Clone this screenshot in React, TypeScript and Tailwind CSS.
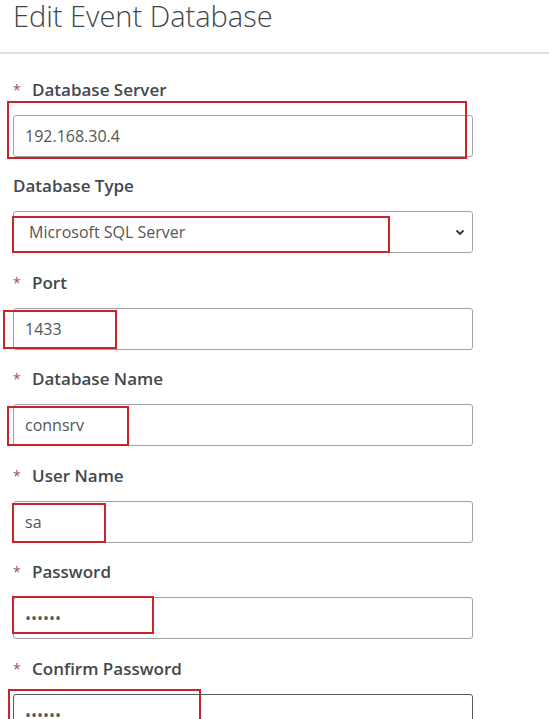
import React from "react";

interface FieldProps {
  label: string;
  required?: boolean;
  value: string;
  type?: string;
  focused?: boolean;
}

const Field: React.FC<FieldProps> = ({ label, required = true, value, type = "text", focused }) => {
  return (
    <div className="flex flex-col">
      <label className="flex h-[25px] items-center text-[17px] font-semibold leading-[25px] text-[#43484c]">
        {required && <span className="w-[19px] text-[14px] font-normal text-[#b5495b]">*</span>}
        {label}
      </label>
      <input
        type={type}
        readOnly
        value={value}
        className={
          focused
            ? "mt-[13px] h-[42px] w-[460px] rounded-[3px] border border-[#4f5d68] bg-white px-[11px] text-[16px] text-[#565656] outline-none"
            : "mt-[13px] h-[42px] w-[460px] rounded-[3px] border border-[#a3a3a3] bg-white px-[11px] text-[16px] text-[#565656] outline-none"
        }
      />
    </div>
  );
};

const App: React.FC = () => {
  return (
    <div className="relative h-[719px] w-[549px] overflow-hidden bg-white font-['Open_Sans',sans-serif]">
      {/* header */}
      <div className="h-[52px] pl-[13px] pt-[4px]">
        <h1 className="text-[29px] font-light leading-[24px] text-[#3e464c]">Edit Event Database</h1>
      </div>
      <div className="h-[2px] bg-[#dedede]" />

      {/* form */}
      <div className="flex flex-col gap-[16.5px] pl-[13px] pt-[22.5px]">
        <Field label="Database Server" value="192.168.30.4" />

        <div className="flex flex-col">
          <label className="flex h-[25px] items-center text-[17px] font-semibold leading-[25px] text-[#43484c]">
            Database Type
          </label>
          <div className="relative mt-[13px] flex h-[42px] w-[460px] items-center rounded-[3px] border border-[#a3a3a3] bg-white pl-[15px] text-[16px] text-[#565656]">
            Microsoft SQL Server
            <svg
              className="absolute right-[6px] top-[16px]"
              width="12"
              height="9"
              viewBox="0 0 12 9"
              fill="none"
              stroke="#333"
              strokeWidth="1.8"
            >
              <path d="M2.5 2.5l3.5 3.5 3.5-3.5" />
            </svg>
          </div>
        </div>

        <Field label="Port" value="1433" />
        <Field label="Database Name" value="connsrv" />
        <Field label="User Name" value="sa" />
        <Field label="Password" value="123456" type="password" />
        <Field label="Confirm Password" value="123456" type="password" focused />
      </div>

      {/* red annotation boxes */}
      <div className="absolute left-[7px] top-[101px] h-[58px] w-[460px] border-2 border-[#cc2229]" />
      <div className="absolute left-[12px] top-[216px] h-[37px] w-[378px] border-2 border-[#cc2229]" />
      <div className="absolute left-[3px] top-[310px] h-[39px] w-[114px] border-2 border-[#cc2229]" />
      <div className="absolute left-[7px] top-[406px] h-[40px] w-[122px] border-2 border-[#cc2229]" />
      <div className="absolute left-[12px] top-[503px] h-[40px] w-[94px] border-2 border-[#cc2229]" />
      <div className="absolute left-[12px] top-[596px] h-[38px] w-[142px] border-2 border-[#cc2229]" />
      <div className="absolute left-[8px] top-[689px] h-[50px] w-[193px] border-2 border-[#cc2229]" />
    </div>
  );
};

export default App;
